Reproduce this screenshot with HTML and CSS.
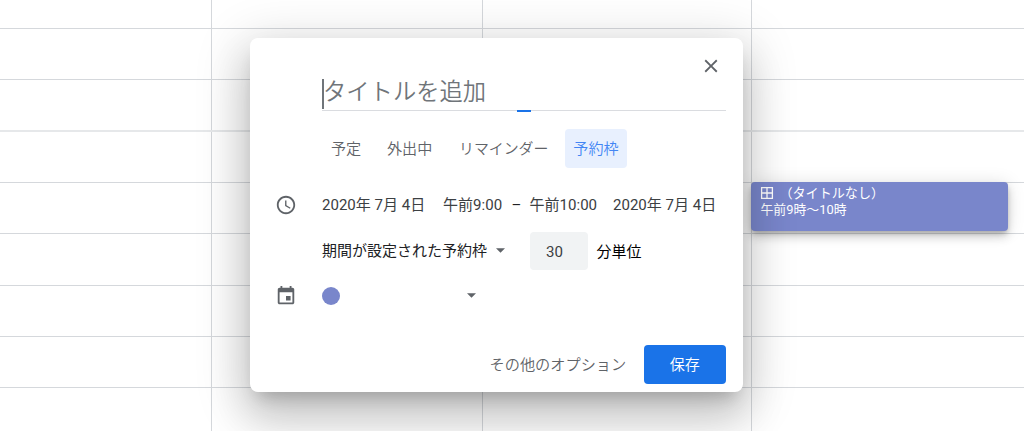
FILE: index.html
```html
<!DOCTYPE html>
<html lang="ja">
<head>
<meta charset="utf-8">
<title>カレンダー</title>
<link rel="stylesheet" href="styles.css">
</head>
<body>
<main class="calendar">
  <div class="grid">
    <div class="day"></div><div class="day"></div><div class="day"></div><div class="day"></div>
    <div class="hour"></div>
    <div class="hour"></div>
    <div class="hour"></div>
    <div class="hour"></div>
    <div class="hour"></div>
    <div class="hour"></div>
    <div class="hour"></div>
    <div class="hour"></div>
  </div>

  <div class="event">
    <div class="event-title">
      <svg class="event-icon" viewBox="0 0 14 14"><path d="M1.6 1.6h10.8v10.8H1.6zM7 1.6v10.8M1.6 7h10.8"/></svg>
      <span>（タイトルなし）</span>
    </div>
    <div class="event-time">午前9時～10時</div>
  </div>

  <section class="dialog">
    <header class="dialog-head">
      <svg class="close" viewBox="0 0 24 24"><path d="M19 6.41L17.59 5 12 10.59 6.41 5 5 6.41 10.59 12 5 17.59 6.41 19 12 13.41 17.59 19 19 17.59 13.41 12z"/></svg>
    </header>
    <div class="title-field">
      <span class="caret"></span><span class="placeholder">タイトルを追加</span>
      <span class="focus-bar"></span>
    </div>
    <nav class="tabs">
      <span class="tab tab-event">予定</span>
      <span class="tab tab-away">外出中</span>
      <span class="tab tab-reminder">リマインダー</span>
      <span class="tab active">予約枠</span>
    </nav>
    <div class="row when">
      <svg class="row-icon" viewBox="0 0 24 24"><path d="M11.99 2C6.47 2 2 6.48 2 12s4.47 10 9.99 10C17.52 22 22 17.52 22 12S17.52 2 11.99 2zM12 20c-4.42 0-8-3.58-8-8s3.58-8 8-8 8 3.58 8 8-3.58 8-8 8zm.5-13H11v6l5.25 3.15.75-1.23-4.5-2.67z"/></svg>
      <span class="date">2020年 7月 4日</span>
      <span class="time">午前9:00</span>
      <span class="dash">–</span>
      <span class="time-end">午前10:00</span>
      <span class="date-end">2020年 7月 4日</span>
    </div>
    <div class="row slots">
      <span class="slot-type">期間が設定された予約枠</span>
      <svg class="arrow" viewBox="0 0 10 5"><path d="M0 0h10L5 5z"/></svg>
      <span class="minutes">30</span>
      <span class="unit">分単位</span>
    </div>
    <div class="row owner">
      <svg class="row-icon" viewBox="0 0 24 24"><path d="M17 12h-5v5h5v-5zM16 1v2H8V1H6v2H5c-1.11 0-1.99.9-1.99 2L3 19c0 1.1.89 2 2 2h14c1.1 0 2-.9 2-2V5c0-1.1-.9-2-2-2h-1V1h-2zm3 18H5V8h14v11z"/></svg>
      <span class="color-dot"></span>
      <svg class="arrow" viewBox="0 0 10 5"><path d="M0 0h10L5 5z"/></svg>
    </div>
    <footer class="actions">
      <span class="more">その他のオプション</span>
      <span class="save">保存</span>
    </footer>
  </section>
</main>
</body>
</html>
```
FILE: styles.css
```css
* { box-sizing: border-box; }

body {
  margin: 0;
  background: #fff;
  font-family: Roboto, "Noto Sans CJK JP", sans-serif;
  font-size: 15.05px;
  color: #3c4043;
}

svg { display: block; flex: none; }

.calendar {
  position: relative;
  width: 1024px;
  height: 431px;
  overflow: hidden;
}

.grid {
  display: grid;
  grid-template-columns: 212px 271px 269px 1fr;
  grid-template-rows: 29px 51px 52px 51px 51px 52px 51px 51px 43px;
  height: 431px;
}

.day { grid-row: 1 / -1; border-right: 1px solid #d5d8dc; }
.day:nth-child(1) { grid-column: 1; }
.day:nth-child(2) { grid-column: 2; }
.day:nth-child(3) { grid-column: 3; }
.day:nth-child(4) { grid-column: 4; border-right: 0; }

.hour { grid-column: 1 / -1; border-bottom: 1px solid #d5d8dc; }
.hour:nth-child(5) { grid-row: 1; }
.hour:nth-child(6) { grid-row: 2; }
.hour:nth-child(7) { grid-row: 3; border-bottom: 2px solid #e6e8ea; }
.hour:nth-child(8) { grid-row: 4; }
.hour:nth-child(9) { grid-row: 5; }
.hour:nth-child(10) { grid-row: 6; }
.hour:nth-child(11) { grid-row: 7; }
.hour:nth-child(12) { grid-row: 8; }

/* event block on the calendar canvas */
.event {
  position: absolute;
  left: 751.4px;
  top: 182px;
  width: 256.6px;
  height: 49px;
  padding: 3px 9px;
  border-radius: 4px;
  background: #7986cb;
  color: #fff;
  font-size: 13.1px;
  line-height: 17px;
  box-shadow: 0 6px 10px rgba(0, 0, 0, .14), 0 1px 18px rgba(0, 0, 0, .12), 0 3px 5px -1px rgba(0, 0, 0, .2);
}
.event-title { display: flex; align-items: center; height: 16px; gap: 5px; }
.event-icon { width: 14px; height: 14px; fill: none; stroke: #fff; stroke-width: 1.3; }
.event-time { font-size: 12.9px; }

/* floating dialog above the calendar */
.dialog {
  position: absolute;
  left: 250px;
  top: 38.4px;
  width: 492.7px;
  height: 354px;
  padding-right: 17px;
  border-radius: 8px;
  background: #fff;
  box-shadow: 0 26px 42px 3px rgba(0, 0, 0, .14), 0 10px 50px 9px rgba(0, 0, 0, .14), 0 12px 16px -8px rgba(0, 0, 0, .2);
}

.dialog-head { display: flex; justify-content: flex-end; height: 39.6px; padding: 16.6px 4px 0 0; }
.close { width: 22px; height: 22px; fill: #5f6368; }

.title-field {
  position: relative;
  display: flex;
  height: 33px;
  margin-left: 72px;
  border-bottom: 1px solid #dadce0;
  font-size: 23.3px;
  font-weight: 350;
  line-height: 28px;
  color: #70757a;
}
.caret { width: 1.5px; height: 30px; margin-top: 1px; background: #70757a; }
.placeholder { margin-left: -.5px; }
.focus-bar {
  position: absolute;
  left: 195px;
  bottom: -2px;
  width: 13.5px;
  height: 2px;
  background: #1a73e8;
}

.tabs { display: flex; height: 39px; margin: 18.3px 0 0 72px; padding-left: 9px; line-height: 40px; color: #5f6368; font-weight: 350; }
.tab { white-space: nowrap; font-size: 15.1px; }
.tab-event { width: 56px; }
.tab-away { width: 72px; }
.tab-reminder { width: 106px; font-size: 14.9px; }
.tab.active { width: 62px; border-radius: 4px; background: #e8f0fe; color: #4285f4; text-align: center; }

.row { display: flex; align-items: center; white-space: nowrap; line-height: 20px; }
.row-icon { width: 22px; height: 22px; margin: 0 25px; fill: #5f6368; }

.when { height: 38px; margin-top: 17.4px; }
.date { width: 121px; }
.time { width: 68.5px; }
.dash { width: 18px; color: #202124; }
.time-end { width: 83.5px; }

.slots { height: 38.5px; margin-top: 8.3px; padding-left: 72px; color: #202124; }
.slot-type { width: 173.5px; font-size: 15px; }
.arrow { width: 9px; height: 5px; fill: #5f6368; margin-bottom: 2px; }
.minutes { width: 58px; height: 38.5px; margin: 0 9px 0 25px; padding-left: 16.5px; border-radius: 4px; background: #f1f3f4; line-height: 40px; color: #3c4043; }
.unit { padding-top: 2px; color: #000; font-size: 15px; }

.owner { height: 38px; margin-top: 6.8px; }
.color-dot { width: 18px; height: 18px; margin-right: 127px; border-radius: 50%; background: #7986cb; }

.actions { display: flex; justify-content: flex-end; height: 38.5px; margin-top: 30px; line-height: 40px; font-weight: 350; }
.more { margin-right: 17.5px; color: #5f6368; font-size: 15.2px; }
.save { width: 82px; border-radius: 4px; background: #1a73e8; color: #fff; text-align: center; }
```
